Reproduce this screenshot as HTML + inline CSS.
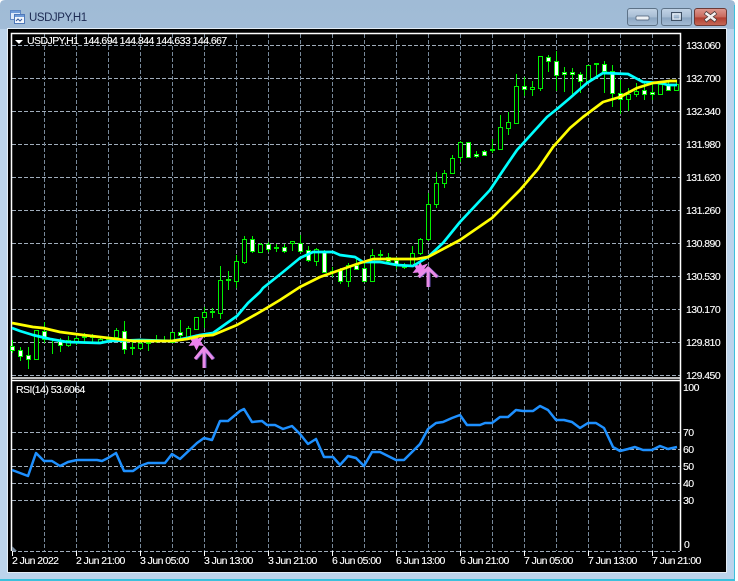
<!DOCTYPE html>
<html><head><meta charset="utf-8"><title>USDJPY,H1</title>
<style>
html,body{margin:0;padding:0;background:#fff;width:738px;height:581px;overflow:hidden}
svg{display:block}
text{font-family:"Liberation Sans",sans-serif;font-size:10.5px;letter-spacing:-.55px;fill:#fff;stroke:#fff;stroke-width:.12px}
</style></head><body>
<svg width="738" height="581" viewBox="0 0 738 581" xmlns="http://www.w3.org/2000/svg">
<defs>
<linearGradient id="tb" x1="0" y1="0" x2="0" y2="1"><stop offset="0" stop-color="#a0bbd6"/><stop offset="1" stop-color="#bdd3e9"/></linearGradient>
<linearGradient id="bt" x1="0" y1="0" x2="0" y2="1"><stop offset="0" stop-color="#c3d4e6"/><stop offset=".5" stop-color="#a7bdd4"/><stop offset=".55" stop-color="#8ca6c2"/><stop offset="1" stop-color="#a5bdd6"/></linearGradient>
<linearGradient id="rd" x1="0" y1="0" x2="0" y2="1"><stop offset="0" stop-color="#dd9a90"/><stop offset=".5" stop-color="#c9695c"/><stop offset=".55" stop-color="#b13e30"/><stop offset="1" stop-color="#c66a58"/></linearGradient>
</defs>
<!-- window frame -->
<path d="M5 0H730Q735 0 735 5V581H0V5Q0 0 5 0Z" fill="url(#tb)"/>
<rect x="0" y="29" width="735" height="552" fill="#bcd4ec"/>
<rect x="7" y="28" width="720" height="545" fill="#e4edf6"/>
<rect x="8" y="29" width="718" height="543" fill="#000"/>
<rect x="0" y="579" width="735" height="2" fill="#3cc0dc"/>
<rect x="734" y="5" width="1" height="576" fill="#3cc0dc"/>
<!-- title icon -->
<rect x="10.500" y="10.500" width="10" height="9" fill="#dfeafa" stroke="#5f88c4"/>
<rect x="14.500" y="14.500" width="10" height="9" fill="#f2f6fc" stroke="#4f78b8"/>
<rect x="11" y="11" width="9" height="2" fill="#6f9bd8"/>
<rect x="15" y="15" width="9" height="2" fill="#6f9bd8"/>
<path d="M16 21l2-2 2 2 2-2" fill="none" stroke="#34589a"/>
<text x="29" y="21" style="font-size:11.500px;letter-spacing:-.45px;fill:#1c2a52;stroke:none">USDJPY,H1</text>
<!-- buttons -->
<rect x="627.500" y="8.500" width="30" height="17" rx="2.500" fill="url(#bt)" stroke="#5d7287"/>
<rect x="636" y="16" width="13" height="4" rx="1" fill="#eef2f6" stroke="#475a70" stroke-width=".7"/>
<rect x="661.500" y="8.500" width="30" height="17" rx="2.500" fill="url(#bt)" stroke="#5d7287"/>
<rect x="671.500" y="12.500" width="10" height="8" fill="none" stroke="#3f5064" stroke-width="1"/>
<rect x="673" y="14" width="7" height="5" fill="none" stroke="#f0f4f8" stroke-width="1"/>
<rect x="694.500" y="8.500" width="32" height="17" rx="2.500" fill="url(#rd)" stroke="#6b3a36"/>
<path d="M705 12.500L716 21M716 12.500L705 21" stroke="#4a3a3a" stroke-width="4"/>
<path d="M705.500 13L715.500 20.500M715.500 13L705.500 20.500" stroke="#f4f0f0" stroke-width="2.600"/>

<!-- grid -->
<path d="M12 45H680M12 78H680M12 111H680M12 144H680M12 177H680M12 210H680M12 243H680M12 276H680M12 309H680M12 342H680M12 375H680M12 432H680M12 449H680M12 466H680M12 483H680M12 500H680M12 551H680" transform="translate(0 .5)" stroke="#a0adbb" stroke-dasharray="4 2" fill="none"/>
<path d="M44.500 34V377M76.500 34V377M108.500 34V377M140.500 34V377M172.500 34V377M204.500 34V377M236.500 34V377M268.500 34V377M300.500 34V377M332.500 34V377M364.500 34V377M396.500 34V377M428.500 34V377M460.500 34V377M492.500 34V377M524.500 34V377M556.500 34V377M588.500 34V377M620.500 34V377M652.500 34V377M44.500 382V551M76.500 382V551M108.500 382V551M140.500 382V551M172.500 382V551M204.500 382V551M236.500 382V551M268.500 382V551M300.500 382V551M332.500 382V551M364.500 382V551M396.500 382V551M428.500 382V551M460.500 382V551M492.500 382V551M524.500 382V551M556.500 382V551M588.500 382V551M620.500 382V551M652.500 382V551" stroke="#778899" stroke-dasharray="4 2" fill="none"/>
<!-- panel borders -->
<path d="M11.500 551V33.500H680.500V551M11 378H681M11 380.500H681" stroke="#fff" fill="none" stroke-width="1.500"/>
<path d="M12.500 551V556M76.500 551V556M140.500 551V556M204.500 551V556M268.500 551V556M332.500 551V556M396.500 551V556M460.500 551V556M524.500 551V556M588.500 551V556M652.500 551V556" stroke="#fff"/>
<path d="M12 546L17 551H12Z" fill="#778899"/>
<path d="M15 40h8l-4 4z" fill="#fff"/>

<!-- candle wicks -->
<path shape-rendering="crispEdges" stroke="#00f000" fill="none" d="M12.500 340V353M20.500 347V361M28.500 347V369M36.500 330V359M44.500 322V343M52.500 338V354M60.500 338V352M68.500 336V347M76.500 336V345M84.500 333V342M92.500 334V342M100.500 338V343M108.500 336V342M116.500 328V342M124.500 321V354M132.500 342V355M140.500 339V350M148.500 341V351M156.500 335V343M164.500 336V342M172.500 332V342M180.500 320V340M188.500 326V338M196.500 317V329M204.500 307V328M212.500 308V318M220.500 266V319M228.500 271V290M236.500 255V288M244.500 236V264M252.500 236V253M260.500 243V253M268.500 242V252M276.500 244V252M284.500 244V253M292.500 241V251M300.500 235V253M308.500 246V262M316.500 248V266M324.500 250V273M332.500 267V277M340.500 268V284M348.500 263V287M356.500 259V269M364.500 263V282M372.500 249V282M380.500 250V260M388.500 253V263M396.500 257V269M404.500 263V269M412.500 246V267M420.500 238V255M428.500 193V241M436.500 172V208M444.500 170V188M452.500 155V173M460.500 141V162M468.500 142V157M476.500 151V158M484.500 150V156M492.500 139V153M500.500 115V150M508.500 112V135M516.500 74V123M524.500 77V96M532.500 81V96M540.500 56V91M548.500 55V72M556.500 51V91M564.500 67V92M572.500 68V94M580.500 72V93M588.500 65V82M596.500 63V77M604.500 61V93M612.500 65V107M620.500 80V114M628.500 88V111M636.500 83V97M644.500 83V100M652.500 82V100M660.500 82V95M668.500 82V90M676.500 82V91"/>
<!-- flat bodies -->
<path shape-rendering="crispEdges" stroke="#00f000" stroke-width="2" fill="none" d="M82 337h5M90 337h5M106 339h5M130 348h5M146 343h5M210 312h5M226 280h5M274 248h5M330 272h5M378 255h5M402 267h5M490 150h5M594 64h5"/>
<!-- black bodies -->
<path shape-rendering="crispEdges" stroke="#00f000" fill="#000" d="M34.500 330.500h4V359.500h-4zM66.500 340.500h4V345.500h-4zM74.500 338.500h4V341.500h-4zM98.500 339.500h4V342.500h-4zM114.500 330.500h4V337.500h-4zM138.500 343.500h4V348.500h-4zM170.500 332.500h4V342.500h-4zM186.500 328.500h4V337.500h-4zM194.500 317.500h4V329.500h-4zM202.500 312.500h4V317.500h-4zM218.500 280.500h4V313.500h-4zM234.500 261.500h4V281.500h-4zM242.500 239.500h4V262.500h-4zM258.500 244.500h4V252.500h-4zM290.500 241.500h4V243.500h-4zM314.500 249.500h4V261.500h-4zM346.500 265.500h4V281.500h-4zM370.500 255.500h4V281.500h-4zM410.500 253.500h4V265.500h-4zM418.500 239.500h4V253.500h-4zM426.500 204.500h4V239.500h-4zM434.500 183.500h4V204.500h-4zM442.500 173.500h4V183.500h-4zM450.500 158.500h4V173.500h-4zM458.500 142.500h4V157.500h-4zM498.500 127.500h4V149.500h-4zM506.500 122.500h4V128.500h-4zM514.500 86.500h4V123.500h-4zM530.500 87.500h4V89.500h-4zM538.500 56.500h4V88.500h-4zM586.500 65.500h4V81.500h-4zM626.500 94.500h4V99.500h-4zM634.500 91.500h4V94.500h-4zM658.500 84.500h4V94.500h-4zM674.500 84.500h4V90.500h-4z"/>
<!-- white bodies -->
<path shape-rendering="crispEdges" stroke="#00f000" fill="#fff" d="M10.500 346.500h4V350.500h-4zM18.500 350.500h4V356.500h-4zM26.500 355.500h4V359.500h-4zM42.500 331.500h4V339.500h-4zM58.500 341.500h4V345.500h-4zM122.500 331.500h4V349.500h-4zM178.500 332.500h4V335.500h-4zM250.500 239.500h4V251.500h-4zM266.500 244.500h4V249.500h-4zM282.500 247.500h4V251.500h-4zM298.500 243.500h4V251.500h-4zM306.500 250.500h4V260.500h-4zM322.500 251.500h4V272.500h-4zM338.500 270.500h4V281.500h-4zM354.500 265.500h4V269.500h-4zM362.500 268.500h4V281.500h-4zM386.500 257.500h4V261.500h-4zM394.500 260.500h4V265.500h-4zM466.500 142.500h4V157.500h-4zM474.500 154.500h4V156.500h-4zM482.500 151.500h4V155.500h-4zM522.500 86.500h4V89.500h-4zM546.500 57.500h4V61.500h-4zM554.500 61.500h4V75.500h-4zM562.500 72.500h4V74.500h-4zM570.500 72.500h4V74.500h-4zM578.500 74.500h4V81.500h-4zM602.500 64.500h4V71.500h-4zM610.500 71.500h4V93.500h-4zM618.500 93.500h4V99.500h-4zM642.500 90.500h4V94.500h-4zM650.500 92.500h4V94.500h-4zM666.500 85.500h4V90.500h-4z"/>

<!-- arrows -->
<g fill="#ee82ee">
<path d="M196 334l2 4.500 6-2-3.500 5 3.500 4.500-5-.5-2.500 5-2.500-5-5.500.5 3.500-4.500-3.500-5 6 2z"/>
<path d="M420 261l2 4.500 6-2-3.500 5 3.500 4.500-5-.5-2.500 5-2.500-5-5.500.5 3.500-4.500-3.500-5 6 2z"/>
</g>
<g fill="none" stroke-width="3">
<path d="M196 359L205 348.500L214 359M205 349V368" stroke="#6a4fb4"/>
<path d="M195 359L204 348L213 359M204 349V368" stroke="#e98ce8"/>
<path d="M419.500 277L429 268.500L438 277M429 269V287" stroke="#6a4fb4"/>
<path d="M418.500 277L428 268L437 277M428 269V287" stroke="#e98ce8"/>
</g>

<!-- moving averages -->
<polyline fill="none" stroke="#00ffff" stroke-width="2.700" stroke-linejoin="round" points="12,328 20,331 33,335 50,339 67,342 100,343 110,341 140,340 172,341 187,338 200,335 213,333 227,323 237,316 248,303 260,292 263,288 283,272 300,258 313,252 333,252 340,255 355,257 363,262 380,262 397,265 413,266 428,257 443,243 460,222 490,190 504,169 517,150 537,128 547,117 557,109 570,98 587,83 603,73 628,74 643,82 660,83 668,85 677,85"/>
<polyline fill="none" stroke="#ffff00" stroke-width="2.700" stroke-linejoin="round" points="12,323 33,327 43,328 60,332 83,335 100,337 117,339 133,341 172,341 187,339 200,336 213,335 237,325 260,312 280,300 300,287 320,277 340,270 357,264 373,259 417,259 428,257 460,240 492,218 520,190 538,169 553,147 570,128 583,117 603,102 620,97 637,88 653,83 670,81 677,81"/>
<!-- RSI -->
<polyline fill="none" stroke="#1e90ff" stroke-width="2.500" stroke-linejoin="round" points="12,470 28,476 36,453 44,461 52,461 60,466 68,462 77,460 97,460 102,461 108,458 116,453 124,471 133,471 140,466 148,463 165,463 172,454 180,459 197,443 204,438 212,440 220,421 228,421 240,411 244,409 252,422 262,421 267,425 275,425 283,429 292,426 300,434 308,444 316,439 324,457 333,457 340,465 348,456 356,458 364,466 372,452 380,452 388,456 396,460 404,460 412,452 420,444 428,429 436,423 443,422 452,418 460,415 467,425 480,425 485,423 492,423 500,417 508,417 516,410 523,411 533,411 540,406 548,410 556,420 564,420 572,422 580,428 588,423 596,423 604,428 613,447 620,451 628,449 635,447 643,450 652,450 660,446 668,449 677,447"/>

<!-- labels -->
<text x="27" y="44">USDJPY,H1 &#160;144.694 144.844 144.633 144.667</text>
<text x="16" y="393">RSI(14) 53.6064</text>
<text x="686" y="49">133.060</text>
<text x="686" y="82">132.700</text>
<text x="686" y="115">132.340</text>
<text x="686" y="148">131.980</text>
<text x="686" y="181">131.620</text>
<text x="686" y="214">131.260</text>
<text x="686" y="247">130.890</text>
<text x="686" y="280">130.530</text>
<text x="686" y="313">130.170</text>
<text x="686" y="346">129.810</text>
<text x="686" y="379">129.450</text>
<text x="683" y="391">100</text>
<text x="683" y="436">70</text>
<text x="683" y="453">60</text>
<text x="683" y="470">50</text>
<text x="683" y="487">40</text>
<text x="683" y="504">30</text>
<text x="684" y="548">0</text>
<text x="12" y="564">2 Jun 2022</text>
<text x="76" y="564">2 Jun 21:00</text>
<text x="140" y="564">3 Jun 05:00</text>
<text x="204" y="564">3 Jun 13:00</text>
<text x="268" y="564">3 Jun 21:00</text>
<text x="332" y="564">6 Jun 05:00</text>
<text x="396" y="564">6 Jun 13:00</text>
<text x="460" y="564">6 Jun 21:00</text>
<text x="524" y="564">7 Jun 05:00</text>
<text x="588" y="564">7 Jun 13:00</text>
<text x="652" y="564">7 Jun 21:00</text>
</svg>
</body></html>
